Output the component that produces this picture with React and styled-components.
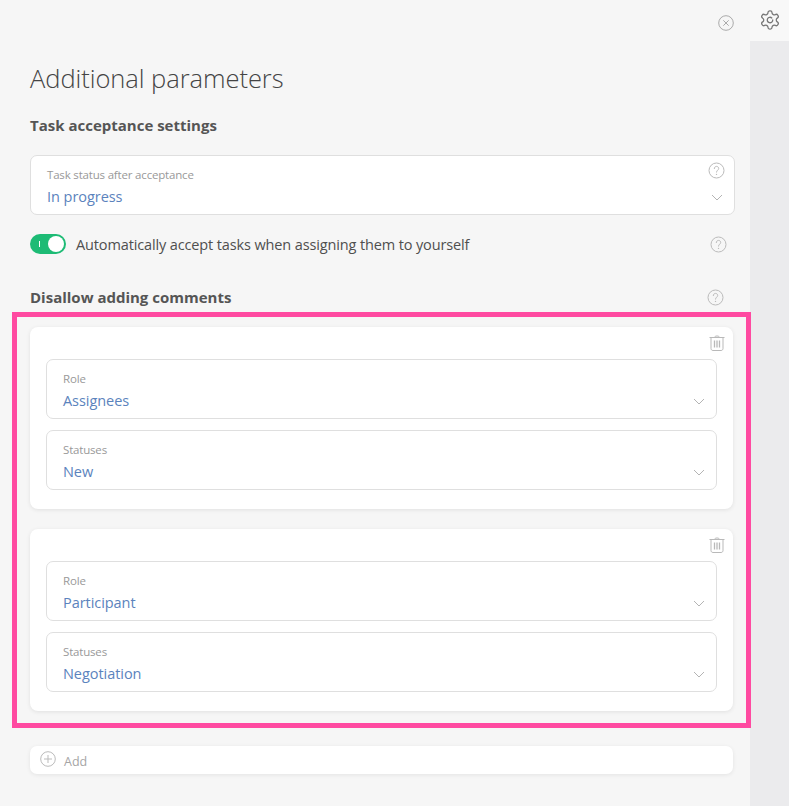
import React from "react";
import styled, { createGlobalStyle } from "styled-components";

const Global = createGlobalStyle`
  html, body {
    margin: 0;
    padding: 0;
    background: #ebebed;
  }
  body {
    font-family: "Open Sans", "Noto Sans", sans-serif;
  }
`;

const Page = styled.div`
  display: flex;
  width: 789px;
  height: 806px;
  overflow: hidden;
`;

const Panel = styled.div`
  position: relative;
  width: 750px;
  height: 806px;
  flex: none;
  box-sizing: border-box;
  padding: 0 17px 0 30px;
  background: #f6f6f6;
`;

const Rail = styled.div`
  flex: 1;
  display: flex;
  flex-direction: column;
`;

const RailTop = styled.div`
  height: 41px;
  background: #f8f8f8;
  display: flex;
  justify-content: center;
  padding-top: 9px;
  box-sizing: border-box;
  color: #777;
`;

const RailBody = styled.div`
  flex: 1;
  background: #ebebed;
`;

const CloseBar = styled.div`
  height: 62px;
  display: flex;
  justify-content: flex-end;
  align-items: flex-start;
  padding: 15px 0 0;
  margin-right: -1px;
  box-sizing: border-box;
  color: #aaa;
`;

const Title = styled.h1`
  margin: 0;
  height: 32px;
  font-size: 25.5px;
  line-height: 32px;
  font-weight: 300;
  color: #444;
  letter-spacing: -0.05px;
`;

const SectionTitle = styled.h2`
  margin: ${(p) => p.$top || 0}px 0 0;
  font-size: 15px;
  line-height: 20px;
  font-weight: 700;
  color: #555;
  letter-spacing: 0;
`;

const Field = styled.div`
  position: relative;
  box-sizing: border-box;
  height: 60px;
  width: ${(p) => p.$width || "auto"};
  margin-top: ${(p) => p.$top || 0}px;
  padding: 11px 16px 0;
  background: #fff;
  border: 1px solid #dfdfdf;
  border-radius: 7px;
`;

const FieldLabel = styled.div`
  font-size: 11.5px;
  line-height: 16px;
  color: #999;
  letter-spacing: -0.18px;
`;

const FieldValue = styled.div`
  font-size: 14.5px;
  line-height: 20px;
  margin-top: 4px;
  color: #5b83bd;
  letter-spacing: -0.05px;
`;

const Chevron = styled.svg`
  position: absolute;
  right: 11px;
  bottom: 13px;
  width: 12px;
  height: 7px;
  color: #b4b4b4;
`;

const FieldHelp = styled.span`
  position: absolute;
  right: 9px;
  top: 6px;
  display: flex;
  color: #bbb;
`;

const ToggleRow = styled.div`
  display: flex;
  align-items: center;
  height: 20px;
  margin-top: 19px;
  padding-right: 6px;
`;

const Toggle = styled.div`
  position: relative;
  flex: none;
  width: 36px;
  height: 20px;
  border-radius: 10px;
  background: #1dbb75;
  &::before {
    content: "";
    position: absolute;
    left: 9px;
    top: 7px;
    width: 1px;
    height: 6px;
    background: #fff;
  }
  &::after {
    content: "";
    position: absolute;
    right: 2px;
    top: 2px;
    width: 16px;
    height: 16px;
    border-radius: 50%;
    background: #fff;
  }
`;

const ToggleText = styled.span`
  flex: 1;
  margin-left: 10px;
  padding-top: 1px;
  font-size: 14.5px;
  line-height: 20px;
  color: #4f4f4f;
  letter-spacing: -0.13px;
`;

const HelpSlot = styled.span`
  display: flex;
  color: #bbb;
`;

const SectionRow = styled.div`
  display: flex;
  justify-content: space-between;
  align-items: center;
  margin-top: 33px;
  padding-right: 9px;
`;

const Highlight = styled.div`
  display: flex;
  flex-direction: column;
  gap: 20px;
  margin: 5px -18px 0;
  padding: 10px 13px 12px;
  border: 5px solid #ff4aa1;
`;

const Card = styled.div`
  position: relative;
  box-sizing: border-box;
  height: 182px;
  padding: 32px 16px 0;
  background: #fff;
  border-radius: 8px;
  box-shadow: 0 1px 4px rgba(0, 0, 0, 0.09);
`;

const Trash = styled.svg`
  position: absolute;
  right: 8px;
  top: 8px;
  width: 16px;
  height: 16px;
  color: #b9b9b9;
`;

const AddRow = styled.div`
  display: flex;
  align-items: center;
  box-sizing: border-box;
  height: 28px;
  margin-top: 18px;
  padding-left: 10px;
  background: #fff;
  border-radius: 7px;
  box-shadow: 0 1px 4px rgba(0, 0, 0, 0.08);
`;

const AddIcon = styled.span`
  display: flex;
  color: #bbb;
  margin-top: -3px;
`;

const AddText = styled.span`
  margin-left: 8px;
  padding-top: 3px;
  font-size: 12.5px;
  color: #a5a5a5;
`;

const Help = () => (
  <svg width="17" height="17" viewBox="0 0 17 17" fill="none" stroke="currentColor">
    <circle cx="8.5" cy="8.5" r="7.5" />
    <path d="M6.3 6.6c0-1.3 1-2.2 2.2-2.2s2.2.9 2.2 2c0 1.800-2.200 1.800-2.200 3.700" strokeLinecap="round" />
    <circle cx="8.5" cy="12.400" r="0.7" fill="currentColor" stroke="none" />
  </svg>
);

const ChevronIcon = () => (
  <Chevron viewBox="0 0 12 7" fill="none" stroke="currentColor">
    <path d="M1 1l5 5 5-5" />
  </Chevron>
);

const TrashIcon = () => (
  <Trash viewBox="0 0 16 16" fill="none" stroke="currentColor">
    <path d="M0.500 2.500h15" />
    <path d="M5.500 2.500c0-2 5-2 5 0" />
    <path d="M2 3v10.500c0 1 .6 2 2 2h8c1.400 0 2-1 2-2V3" />
    <path d="M5.500 5.500v7M8 5.500v7M10.500 5.500v7" strokeWidth="1.300" />
  </Trash>
);

const SelectField = ({ label, value, top, width, help }) => (
  <Field $top={top} $width={width}>
    <FieldLabel>{label}</FieldLabel>
    <FieldValue>{value}</FieldValue>
    {help && (
      <FieldHelp>
        <Help />
      </FieldHelp>
    )}
    <ChevronIcon />
  </Field>
);

const rules = [
  { role: "Assignees", status: "New" },
  { role: "Participant", status: "Negotiation" },
];

export default function App() {
  return (
    <Page>
      <Global />
      <Panel>
        <CloseBar>
          <svg width="16" height="16" viewBox="0 0 16 16" fill="none" stroke="currentColor">
            <circle cx="8" cy="8" r="7.300" />
            <path d="M5.300 5.300l5.400 5.400M10.700 5.300l-5.400 5.400" />
          </svg>
        </CloseBar>
        <Title>Additional parameters</Title>
        <SectionTitle $top={21}>Task acceptance settings</SectionTitle>
        <SelectField
          label="Task status after acceptance"
          value="In progress"
          top={20}
          width="705px"
          help
        />
        <ToggleRow>
          <Toggle />
          <ToggleText>Automatically accept tasks when assigning them to yourself</ToggleText>
          <HelpSlot>
            <Help />
          </HelpSlot>
        </ToggleRow>
        <SectionRow>
          <SectionTitle>Disallow adding comments</SectionTitle>
          <HelpSlot>
            <Help />
          </HelpSlot>
        </SectionRow>
        <Highlight>
          {rules.map((rule) => (
            <Card key={rule.role}>
              <TrashIcon />
              <SelectField label="Role" value={rule.role} />
              <SelectField label="Statuses" value={rule.status} top={11} />
            </Card>
          ))}
        </Highlight>
        <AddRow>
          <AddIcon>
            <svg width="16" height="16" viewBox="0 0 16 16" fill="none" stroke="currentColor">
              <circle cx="8" cy="8" r="7.300" />
              <path d="M8 4v8M4 8h8" />
            </svg>
          </AddIcon>
          <AddText>Add</AddText>
        </AddRow>
      </Panel>
      <Rail>
        <RailTop>
          <svg width="22" height="22" viewBox="0 0 24 24" fill="none" stroke="currentColor" strokeWidth="1.400">
            <path d="M12.220 2h-.44a2 2 0 0 0-2 2v.18a2 2 0 0 1-1 1.730l-.43.25a2 2 0 0 1-2 0l-.15-.08a2 2 0 0 0-2.730.73l-.22.380a2 2 0 0 0 .73 2.730l.15.100a2 2 0 0 1 1 1.720v.51a2 2 0 0 1-1 1.740l-.15.090a2 2 0 0 0-.73 2.730l.22.380a2 2 0 0 0 2.730.73l.15-.08a2 2 0 0 1 2 0l.43.250a2 2 0 0 1 1 1.730V20a2 2 0 0 0 2 2h.44a2 2 0 0 0 2-2v-.18a2 2 0 0 1 1-1.730l.43-.25a2 2 0 0 1 2 0l.15.080a2 2 0 0 0 2.730-.73l.22-.390a2 2 0 0 0-.73-2.730l-.15-.080a2 2 0 0 1-1-1.740v-.5a2 2 0 0 1 1-1.740l.15-.090a2 2 0 0 0 .73-2.730l-.22-.380a2 2 0 0 0-2.730-.73l-.15.080a2 2 0 0 1-2 0l-.43-.250a2 2 0 0 1-1-1.730V4a2 2 0 0 0-2-2z" />
            <path d="M15 12a3 3 0 1 1-1-2.240" strokeLinecap="round" />
          </svg>
        </RailTop>
        <RailBody />
      </Rail>
    </Page>
  );
}
